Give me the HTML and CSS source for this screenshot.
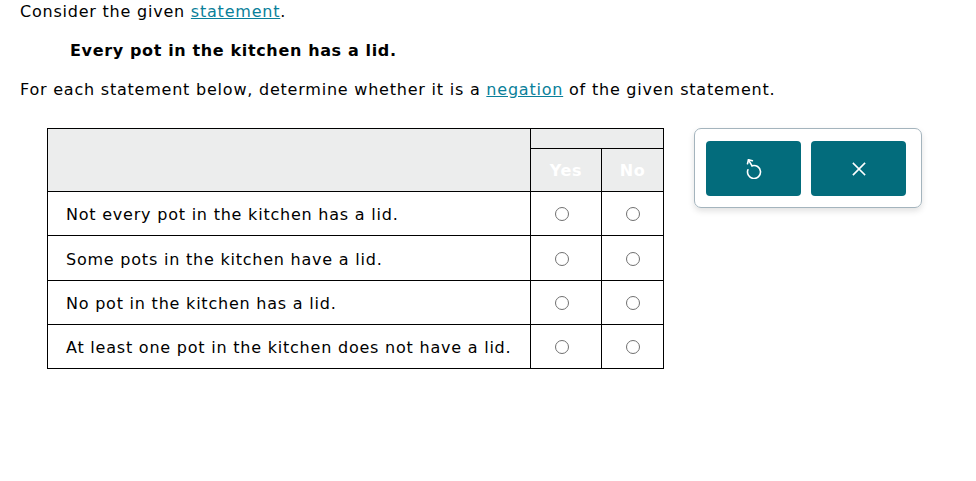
FILE: index.html
```html
<!DOCTYPE html>
<html>
<head>
<meta charset="utf-8">
<link rel="stylesheet" href="styles.css">
</head>
<body>
<div class="page">
  <p class="intro">Consider the given <a href="#" class="term">statement</a>.</p>
  <p class="given">Every pot in the kitchen has a lid.</p>
  <p class="prompt">For each statement below, determine whether it is a <a href="#" class="term">negation</a> of the given statement.</p>
  <div class="work">
    <table class="grid">
      <thead>
        <tr>
          <th class="blank" rowspan="2"></th>
          <th class="group" colspan="2"></th>
        </tr>
        <tr>
          <th class="opt yes">Yes</th>
          <th class="opt no">No</th>
        </tr>
      </thead>
      <tbody>
        <tr><td class="stmt">Not every pot in the kitchen has a lid.</td><td class="choice c-yes"><span class="radio"></span></td><td class="choice"><span class="radio"></span></td></tr>
        <tr class="tall"><td class="stmt">Some pots in the kitchen have a lid.</td><td class="choice c-yes"><span class="radio"></span></td><td class="choice"><span class="radio"></span></td></tr>
        <tr><td class="stmt">No pot in the kitchen has a lid.</td><td class="choice c-yes"><span class="radio"></span></td><td class="choice"><span class="radio"></span></td></tr>
        <tr><td class="stmt">At least one pot in the kitchen does not have a lid.</td><td class="choice c-yes"><span class="radio"></span></td><td class="choice"><span class="radio"></span></td></tr>
      </tbody>
    </table>
    <div class="tools">
      <button class="tool" aria-label="Undo">
        <svg width="16" height="21" viewBox="0 0 16 21" fill="none" stroke="#fff" stroke-width="1.6" stroke-linecap="round" stroke-linejoin="round">
          <path d="M6 7.8 A6.5 6.5 0 1 1 1.9 11.8"/>
          <path d="M6 7.8 L2.5 1.8"/>
          <path d="M6.4 2.8 L2.5 1.8 L1.5 5.7"/>
        </svg>
      </button>
      <button class="tool" aria-label="Clear">
        <svg width="18" height="18" viewBox="0 0 18 18" fill="none" stroke="#fff" stroke-width="1.7" stroke-linecap="square">
          <path d="M3.5 3.5 L14.5 14.5 M14.5 3.5 L3.5 14.5"/>
        </svg>
      </button>
    </div>
  </div>
</div>
</body>
</html>
```

FILE: styles.css
```css
html, body {
  margin: 0;
  padding: 0;
  background: #fff;
}
body {
  font-family: "DejaVu Sans", Verdana, sans-serif;
  font-size: 16px;
  letter-spacing: 0.78px;
  color: #000;
}
.page {
  padding: 1px 20px 0;
}
p {
  margin: 0;
  line-height: 22px;
}
.given {
  font-weight: bold;
  letter-spacing: 0.64px;
  margin-top: 17px;
  padding-left: 50px;
}
.prompt {
  margin-top: 17px;
}
.term {
  color: #0a7f9a;
  text-decoration: underline;
}
.work {
  display: flex;
  align-items: flex-start;
  margin-top: 27px;
  padding-left: 27px;
}
.grid {
  border-collapse: collapse;
  font-size: 16px;
}
.grid th, .grid td {
  border: 1px solid #000;
  padding: 0;
}
.grid thead th {
  background: #eceded;
}
.blank {
  width: 482px;
}
.group {
  height: 19px;
}
.opt {
  height: 42px;
  color: #fff;
  font-weight: bold;
  letter-spacing: 0.6px;
}
.yes { width: 70px; }
.no { width: 61px; }
.stmt {
  height: 41px;
  padding: 2px 0 0 18px !important;
  text-align: left;
}
.tall .stmt {
  height: 42px;
}
.choice {
  text-align: center;
  line-height: 0;
  padding-top: 1px !important;
}
.c-yes {
  padding-right: 8px !important;
}
.radio {
  display: inline-block;
  width: 12px;
  height: 12px;
  border: 1.5px solid #707070;
  border-radius: 50%;
  vertical-align: middle;
}
.tools {
  display: flex;
  gap: 10px;
  margin-left: 30px;
  padding: 12px 15px 11px 11px;
  border: 1px solid #a4b4bd;
  border-radius: 7px;
  box-shadow: 0 3px 6px rgba(0, 0, 0, 0.12);
}
.tool {
  width: 95px;
  height: 55px;
  border: none;
  border-radius: 4px;
  background: #036c7c;
  display: flex;
  align-items: center;
  justify-content: center;
  padding: 0;
}
```
